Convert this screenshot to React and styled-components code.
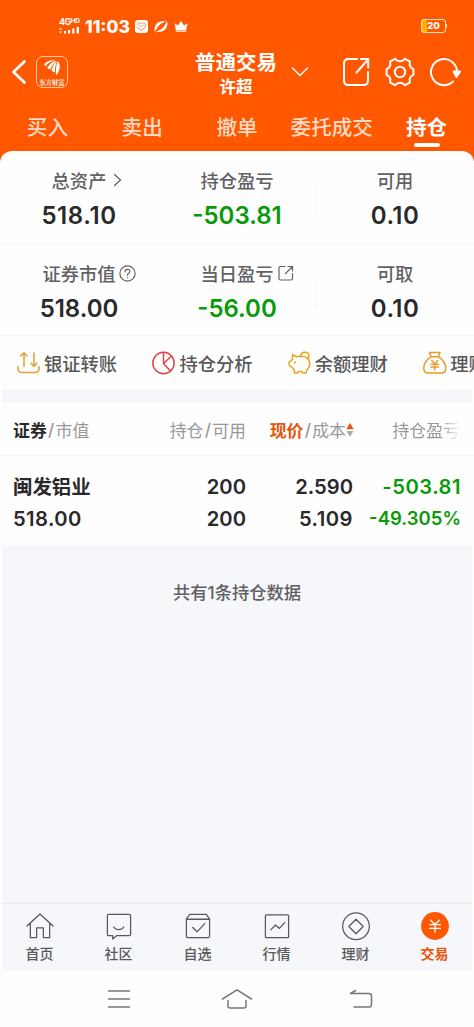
import React from 'react';
import styled, { createGlobalStyle } from 'styled-components';

const GlobalStyle = createGlobalStyle`
  * {
    box-sizing: border-box;
  }
  body {
    margin: 0;
    background: #fefefe;
    font-family: Inter, "Noto Sans CJK SC", sans-serif;
    color: #29292b;
  }
  svg {
    display: block;
    flex: none;
    fill: none;
    stroke: currentColor;
    stroke-linecap: round;
    stroke-linejoin: round;
  }
`;

const Page = styled.div`
  width: 474px;
  height: 1027px;
  display: flex;
  flex-direction: column;
  overflow: hidden;
  white-space: nowrap;
`;

const Top = styled.header`
  height: 151px;
  flex: none;
  background: #ff5800;
  color: #fff;
`;

const StatusBar = styled.div`
  height: 48px;
  padding: 4px 26px 0 59px;
  display: flex;
  align-items: center;
`;

const Network = styled.div`
  width: 21px;
  display: flex;
  flex-direction: column;
  gap: 1px;
  font-size: 9px;
  line-height: 8px;
  font-weight: 700;
  letter-spacing: -0.5px;
  sup {
    font-size: 6.5px;
    line-height: 1px;
    vertical-align: 2px;
  }
`;

const Time = styled.div`
  margin: 0 5px 0 5px;
  width: 45px;
  font-size: 17.4px;
  font-weight: 800;
`;

const StatusIcons = styled.div`
  display: flex;
  align-items: center;
  gap: 6px;
`;

const Battery = styled.div`
  position: relative;
  margin-left: auto;
  margin-right: 2px;
  width: 25px;
  height: 14px;
  border: 1px solid #ffe2bd;
  border-radius: 3px;
  background: linear-gradient(90deg, #ffb400 5px, transparent 5px);
  font-size: 9.5px;
  line-height: 12px;
  font-weight: 800;
  text-align: center;
  &::after {
    content: "";
    position: absolute;
    right: -2px;
    top: 4px;
    width: 1px;
    height: 4px;
    background: #ffe2bd;
  }
`;

const TitleRow = styled.div`
  height: 56px;
  padding: 0 13px 8px 11px;
  display: grid;
  grid-template: 48px / 150px 1fr 119px;
  align-items: center;
`;

const Brand = styled.div`
  display: flex;
  align-items: center;
  gap: 8px;
`;

const Logo = styled.div`
  width: 32px;
  height: 32px;
  padding-top: 2px;
  border: 1px solid #ffc9a8;
  border-radius: 7px;
  display: flex;
  flex-direction: column;
  align-items: center;
  font-family: "Noto Serif CJK SC", "Noto Sans CJK SC", sans-serif;
  font-size: 6.3px;
  line-height: 9px;
  font-weight: 700;
`;

const Account = styled.div`
  display: flex;
  align-items: center;
  gap: 14px;
  padding-left: 34px;
`;

const AccountName = styled.div`
  padding-top: 4px;
  text-align: center;
  font-weight: 700;
  font-size: 20.5px;
  line-height: 27px;
  small {
    display: block;
    font-size: 16.5px;
    line-height: 23px;
  }
`;

const Tools = styled.div`
  display: flex;
  justify-content: space-between;
`;

const Tabs = styled.nav`
  height: 47px;
  display: grid;
  grid-template-columns: repeat(5, 1fr);
`;

const Tab = styled.div`
  display: flex;
  flex-direction: column;
  align-items: center;
  font-size: 20.6px;
  line-height: 48px;
  height: 46px;
  font-weight: ${p => (p.$active ? 700 : 500)};
  color: ${p => (p.$active ? '#fff' : '#ffdac5')};
  &::after {
    content: "";
    flex: none;
    width: 26px;
    height: 4px;
    margin-top: -9px;
    border-radius: 2px;
    background: ${p => (p.$active ? '#fff' : 'transparent')};
  }
`;

const Sheet = styled.section`
  flex: none;
  background: #ff5800;
`;

const StatRow = styled.div`
  height: ${p => p.$height}px;
  border-bottom: 1px solid #f6f6f7;
  border-radius: ${p => (p.$first ? '12px 12px 0 0' : '0')};
  background: #fefefe;
  display: grid;
  grid-template-columns: repeat(3, 1fr);
`;

const Stat = styled.div`
  padding-top: 14px;
  display: flex;
  flex-direction: column;
  align-items: center;
  background: linear-gradient(#f7f7f8, #f7f7f8) right 33px / 1px 31px no-repeat;
  &:last-child {
    background: none;
  }
`;

// the trailing icon hangs outside, so the words stay centred over the value
const StatLabel = styled.div`
  height: 30px;
  display: flex;
  align-items: center;
  font-size: 18.3px;
  font-weight: 500;
  color: #626264;
  svg {
    margin-left: ${p => p.$gap}px;
    margin-right: ${p => -p.$gap - p.$icon}px;
  }
`;

const StatValue = styled.div`
  font-size: 24px;
  line-height: 42px;
  font-weight: 600;
  letter-spacing: ${p => p.$track || 0}px;
  color: ${p => (p.$loss ? '#099a09' : '#29292b')};
`;

const Shortcuts = styled.div`
  flex: none;
  height: 54px;
  padding-left: 16px;
  display: flex;
`;

const Shortcut = styled.div`
  flex: none;
  width: 135.4px;
  display: flex;
  align-items: center;
  gap: 3px;
  font-size: 18.3px;
  font-weight: 500;
  color: #58585a;
`;

const Gap = styled.div`
  flex: none;
  height: 12px;
  margin: 0 2px;
  background: #f6f7fa;
`;

const TableHead = styled.div`
  flex: none;
  height: 54px;
  padding: 2px 0 0 13px;
  border-bottom: 1px solid #f6f6f7;
  display: grid;
  grid-template-columns: 133px 100px 108px 106px;
  align-items: center;
  font-size: 16.9px;
  color: #98989b;
  > :not(:first-child) {
    justify-self: end;
  }
`;

const HeadCell = styled.div`
  display: flex;
  align-items: center;
  b {
    font-weight: 700;
    color: ${p => (p.$sorted ? '#e4550c' : '#29292b')};
  }
  i {
    width: 8.8px;
    text-align: center;
    font-style: normal;
    font-weight: 500;
  }
`;

const FadeCell = styled(HeadCell)`
  mask-image: linear-gradient(90deg, #000 70%, transparent 102%);
`;

const Holding = styled.div`
  flex: none;
  height: 89px;
  padding: 14px 0 0 13px;
  display: grid;
  grid-template-columns: 133px 100px 107px 108px;
  grid-auto-rows: 32px;
  align-items: center;
`;

const Cell = styled.div`
  justify-self: ${p => (p.$left ? 'start' : 'end')};
  font-size: 20.2px;
  font-weight: 600;
  letter-spacing: ${p => p.$track || 0}px;
  color: #29292b;
`;

const StockName = styled(Cell)`
  font-size: 19.4px;
  padding-bottom: 2px;
`;

const Loss = styled(Cell)`
  font-size: ${p => p.$size || 20.2}px;
  color: #099a09;
`;

const Rest = styled.main`
  flex: 1;
  margin: 0 2px;
  padding-top: 35px;
  background: #f6f7fa;
  text-align: center;
  font-size: 17.3px;
  line-height: 26px;
  font-weight: 500;
  color: #606063;
`;

const BottomNav = styled.nav`
  flex: none;
  height: 68px;
  margin: 0 2px;
  padding-top: 8px;
  border-top: 1px solid #ececef;
  background: #f6f7fa;
  display: grid;
  grid-template-columns: repeat(6, 79px);
  justify-content: center;
`;

const NavItem = styled.div`
  display: flex;
  flex-direction: column;
  align-items: center;
  color: ${p => (p.$active ? '#e9560b' : '#59595b')};
  font-size: 14px;
  line-height: 26px;
  font-weight: ${p => (p.$active ? 700 : 500)};
`;

const SystemNav = styled.div`
  flex: none;
  height: 56px;
  padding: 0 41px;
  display: grid;
  grid-template-columns: 156px 80px 168px;
  place-items: center;
  color: #77777a;
`;

const SignalIcon = () => (
  <svg width="21" height="7" viewBox="0 0 21 7">
    <g stroke="none" fill="#fff">
      <path d="M0 2.500 1.500.5 3 2.500ZM0 4.500h3L1.500 6.500ZM5 4h2.200v2.600H5ZM9 3h2.200v3.600H9ZM13.200 1.600h2.200v5h-2.200ZM17.600 0h2.400v6.600h-2.400Z" />
    </g>
  </svg>
);

const AppBadge = () => (
  <svg width="13" height="13" viewBox="0 0 13 13">
    <rect width="13" height="13" rx="3" fill="#fff" stroke="none" />
    <g stroke="#ff7a35" strokeWidth=".9">
      <path d="M2.500 4.500c1-2 2.500-2 3.800-1M7 3.500c1.500-1.500 3.500-.5 3.500 1.500S8.500 9 7 10.500M2.500 7c.5 2 2 3 4 3M4.500 5.500l1 1M7.500 6l1-1" />
    </g>
  </svg>
);

const Planet = () => (
  <svg width="14" height="13" viewBox="0 0 14 13">
    <path d="M1 11.800C-.5 7 2.500 1.500 8 1.300c2 0 3.500-.3 5-.8C9 2.500 4 5.500 1 11.800Z" fill="#fff" stroke="none" />
    <path d="M13 1.200C14.500 6 11.500 11.500 6 11.700c-2 0-3.500.3-5 .8C5 10.500 10 7.500 13 1.200Z" fill="#fff" stroke="none" />
    <ellipse cx="7" cy="6.500" rx="4.300" ry="2.200" transform="rotate(-43 7 6.500)" fill="#ff5800" stroke="none" />
  </svg>
);

const Crown = () => (
  <svg width="14" height="13" viewBox="0 0 14 13">
    <path d="M.5 3.200 4 5.500 7 .8l3 4.700 3.500-2.300-1.300 6.800H1.800Z" fill="#fff" stroke="none" />
    <path d="M2.500 11.200h9" stroke="#ffd0b5" strokeWidth="1.800" />
  </svg>
);

const BackIcon = () => (
  <svg width="17" height="26" viewBox="0 0 17 26" strokeWidth="2.700">
    <path d="M13.500 2.500 2.500 13l11 10.500" />
  </svg>
);

const LogoMark = () => (
  <svg width="18" height="19" viewBox="0 0 18 19">
    <g fill="#fff" stroke="none">
      <path d="M1 5.500C4 1.800 8 .8 12.500 1.500 8 2.500 4.500 4 2.500 7.500Z" />
      <path d="M4.200 9C6.500 4.800 9.500 2.800 13.300 2 10.500 4.500 8.500 7 7.200 10.800Z" />
      <path d="M8.600 12c.5-4.500 2.500-7.500 5.400-9.800-1.700 3.800-2.200 7-2 11.300Z" />
      <path d="M13 16.500C12.600 10 13 5.500 15 2c3 4.500 2 9.500-2 14.500Z" />
    </g>
  </svg>
);

const ChevronDown = () => (
  <svg width="18" height="12" viewBox="0 0 18 12" strokeWidth="1.400">
    <path d="m1.500 2 7.500 7.500L16.500 2" />
  </svg>
);

const ShareIcon = () => (
  <svg width="28" height="30" viewBox="0 0 28 30" strokeWidth="2">
    <path d="M15 2H6.500Q2 2 2 6.500v17Q2 28 6.500 28h15q4.500 0 4.500-4.500V15M14.500 15.500 26 2.500M19 2h7.200v8.500" />
  </svg>
);

const GearIcon = () => (
  <svg width="30" height="30" viewBox="0 0 30 30" strokeWidth="2">
    <path d="M10 1.800 12.200 3.600Q15 5 17.800 3.600L20 1.800 25 4.700 24.600 7.500Q25 10.500 27.500 11.600L28.500 12.500V17.500L27.500 18.400Q25 19.500 24.600 22.500L25 25.300 20 28.200 17.800 26.400Q15 25 12.200 26.400L10 28.200 5 25.300 5.400 22.500Q5 19.500 2.500 18.400L1.500 17.500V12.500L2.500 11.600Q5 10.500 5.400 7.500L5 4.700Z" />
    <circle cx="15" cy="15" r="5.200" />
  </svg>
);

const RefreshIcon = () => (
  <svg width="32" height="30" viewBox="0 0 32 30" strokeWidth="2">
    <path d="M24 24.500A13 13 0 1 1 28 15" />
    <path d="M24.500 14.500h6.500L27.500 20Z" fill="#fff" />
  </svg>
);

const ChevronRight = () => (
  <svg width="9" height="14" viewBox="0 0 9 14" strokeWidth="1.300">
    <path d="m1.500 1.500 6 5.500-6 5.500" />
  </svg>
);

const HelpIcon = () => (
  <svg width="17" height="17" viewBox="0 0 17 17" strokeWidth="1.200">
    <circle cx="8.500" cy="8.500" r="7.600" />
    <path d="M6 6.800c0-3.300 5-3.300 5-.2 0 1.700-2.500 1.700-2.500 3.600M8.500 12.300v.3" />
  </svg>
);

const OpenIcon = () => (
  <svg width="17" height="17" viewBox="0 0 17 17" strokeWidth="1.200">
    <path d="M8 1.500H3.500Q2 1.500 2 3v10.500Q2 15 3.500 15H14q1.500 0 1.500-1.500V8.500M8.500 8.500l7-7M11 1.500h4.500V6" />
  </svg>
);

const TransferIcon = () => (
  <svg width="25" height="24" viewBox="0 0 25 24" color="#e9a23b" strokeWidth="1.600">
    <path d="M8 15.500V2M4.500 5 8 1.800 11 5M18 2v13.500M15 12.300l3 3.200 3-3.200M2 15.500v2Q2 21.500 6 21.500h13q4 0 4-4v-2" />
  </svg>
);

const PieIcon = () => (
  <svg width="25" height="24" viewBox="0 0 25 24" color="#df454b" strokeWidth="1.500">
    <circle cx="12.500" cy="12" r="10.700" />
    <path d="M12.500 1.500V12.500L19.500 20M12.500 12.500 20.500 5" />
  </svg>
);

const PiggyIcon = () => (
  <svg width="25" height="24" viewBox="0 0 25 24" color="#eba51c" strokeWidth="1.500">
    <path d="M13.500 5.500Q11 5 9.500 5.800L5.500 3.500V8L4 10Q2 10.300 2 11v2.500q0 1 2.500 2.200L7 18.500l.5 3.500h3l1-1.500h3.500l1 1.500h3l1-3.500c5-4.500 2.500-11-1.500-12.500" />
    <path d="M13.500 5.500C13.500 0 22 0 22 5c0 1.500-.5 2-1.300 2.800M13.500 5.500h4" />
    <path d="M8 11.200v.2" strokeWidth="2" />
  </svg>
);

const MoneyBagIcon = () => (
  <svg width="25" height="24" viewBox="0 0 25 24" color="#e89c2d" strokeWidth="1.500">
    <path d="M7.500 1.500h10.500l-1.500 4.300H9ZM9 5.800C4 9 1.800 13 1.800 17q0 5 4.500 5h12.900q4.500 0 4.500-5c0-4-2.200-8-7.200-11.200" />
    <path d="m9.800 9.500 3 3.500 3-3.500M9 13.300h7.500M9 16h7.500M12.800 13v6" />
  </svg>
);

const SortIcon = () => (
  <svg width="8" height="16" viewBox="0 0 8 16">
    <path d="M.3 7.300 4 .8 7.700 7.300Z" fill="#df5a17" stroke="none" />
    <path d="M.5 9 4 15l3.500-6Z" fill="#aaaaad" stroke="none" />
  </svg>
);

const navPaths = {
  home: 'M1.500 14.500 15 2l13.500 12.500M5 11.500V26.500h6.500V16.500h7V26.500H25V11.500',
  chat: 'M4.500 2.500h21q1.500 0 1.500 1.500V23q0 1.500-1.500 1.500H12.500L8.500 28v-3.500h-4Q3 24.500 3 23V4Q3 2.500 4.500 2.500M9.500 15.500c2.500 3.700 8 3.700 10.500 0',
  picks: 'M3 7 6.500 2.500h17L27 7V25q0 1.500-1.500 1.500h-21Q3 26.500 3 25ZM3 7.500h24M9.500 16l4.500 4.500 8-8.500',
  market: 'M4 3h22q1 0 1 1V25.500q0 1-1 1H4q-1 0-1-1V4q0-1 1-1M8.500 18.500l5-5 4 3.500 5.500-6',
  wealth: 'M15 1a13.800 13.800 0 1 1 0 27.600 13.800 13.800 0 0 1 0-27.600M15 7.500l7.500 7.500-7.500 7.500L7.500 15Z',
};

const NavIcon = ({ name }) => (
  <svg width="30" height="29" viewBox="0 0 30 30" strokeWidth="1.300">
    <path d={navPaths[name]} />
  </svg>
);

const TradeIcon = () => (
  <svg width="30" height="29" viewBox="0 0 30 30" strokeWidth="1.400">
    <circle cx="15" cy="14.500" r="14.400" fill="#ff5800" stroke="none" />
    <path d="m10.500 8.500 4.500 4.500 4.500-4.500M9.500 13h11M9.500 17h11M15 13v8" stroke="#fff" />
  </svg>
);

const navItems = [
  { name: 'home', label: '首页' },
  { name: 'chat', label: '社区' },
  { name: 'picks', label: '自选' },
  { name: 'market', label: '行情' },
  { name: 'wealth', label: '理财' },
];

function Overview() {
  return (
    <Sheet>
      <StatRow $height={93} $first>
        <Stat>
          <StatLabel $gap={7} $icon={9}>总资产<ChevronRight /></StatLabel>
          <StatValue $track={0.6}>518.10</StatValue>
        </Stat>
        <Stat>
          <StatLabel>持仓盈亏</StatLabel>
          <StatValue $loss>-503.81</StatValue>
        </Stat>
        <Stat>
          <StatLabel>可用</StatLabel>
          <StatValue $track={0.4}>0.10</StatValue>
        </Stat>
      </StatRow>
      <StatRow $height={92}>
        <Stat>
          <StatLabel $gap={3} $icon={17}>证券市值<HelpIcon /></StatLabel>
          <StatValue>518.00</StatValue>
        </Stat>
        <Stat>
          <StatLabel $gap={3} $icon={17}>当日盈亏<OpenIcon /></StatLabel>
          <StatValue $loss>-56.00</StatValue>
        </Stat>
        <Stat>
          <StatLabel>可取</StatLabel>
          <StatValue $track={0.4}>0.10</StatValue>
        </Stat>
      </StatRow>
    </Sheet>
  );
}

function App() {
  return (
    <Page>
      <GlobalStyle />
      <Top>
        <StatusBar>
          <Network>
            <span>4G<sup>HD</sup></span>
            <SignalIcon />
          </Network>
          <Time>11:03</Time>
          <StatusIcons>
            <AppBadge />
            <Planet />
            <Crown />
          </StatusIcons>
          <Battery>20</Battery>
        </StatusBar>
        <TitleRow>
          <Brand>
            <BackIcon />
            <Logo>
              <LogoMark />
              东方财富
            </Logo>
          </Brand>
          <Account>
            <AccountName>
              普通交易
              <small>许超</small>
            </AccountName>
            <ChevronDown />
          </Account>
          <Tools>
            <ShareIcon />
            <GearIcon />
            <RefreshIcon />
          </Tools>
        </TitleRow>
        <Tabs>
          {['买入', '卖出', '撤单', '委托成交', '持仓'].map(tab => (
            <Tab key={tab} $active={tab === '持仓'}>{tab}</Tab>
          ))}
        </Tabs>
      </Top>
      <Overview />
      <Shortcuts>
        <Shortcut><TransferIcon />银证转账</Shortcut>
        <Shortcut><PieIcon />持仓分析</Shortcut>
        <Shortcut><PiggyIcon />余额理财</Shortcut>
        <Shortcut><MoneyBagIcon />理财</Shortcut>
      </Shortcuts>
      <Gap />
      <TableHead>
        <HeadCell><b>证券</b><i>/</i>市值</HeadCell>
        <HeadCell>持仓<i>/</i>可用</HeadCell>
        <HeadCell $sorted><b>现价</b><i>/</i>成本<SortIcon /></HeadCell>
        <FadeCell>持仓盈亏</FadeCell>
      </TableHead>
      <Holding>
        <StockName $left>闽发铝业</StockName>
        <Cell>200</Cell>
        <Cell>2.590</Cell>
        <Loss $track={0.5}>-503.81</Loss>
        <Cell $left $track={0.4}>518.00</Cell>
        <Cell>200</Cell>
        <Cell $track={0.5}>5.109</Cell>
        <Loss $size={18.5}>-49.305%</Loss>
      </Holding>
      <Rest>共有1条持仓数据</Rest>
      <BottomNav>
        {navItems.map(item => (
          <NavItem key={item.name}>
            <NavIcon name={item.name} />
            {item.label}
          </NavItem>
        ))}
        <NavItem $active>
          <TradeIcon />
          交易
        </NavItem>
      </BottomNav>
      <SystemNav>
        <svg width="24" height="20" viewBox="0 0 24 20" strokeWidth="1.500">
          <path d="M1.500 2h21M1.500 10h21M1.500 18h21" />
        </svg>
        <svg width="32" height="22" viewBox="0 0 32 22" strokeWidth="1.500">
          <path d="M1.500 11 16 1.800 30.500 11M7 12.500V18q0 2 2 2h14q2 0 2-2v-5.500" />
        </svg>
        <svg width="24" height="20" viewBox="0 0 24 20" strokeWidth="1.500">
          <path d="M6.500 1.500 1.500 4.500H20q2.500 0 2.500 2.500v8.500q0 2.500-2.500 2.500H5" />
        </svg>
      </SystemNav>
    </Page>
  );
}

export default App;
